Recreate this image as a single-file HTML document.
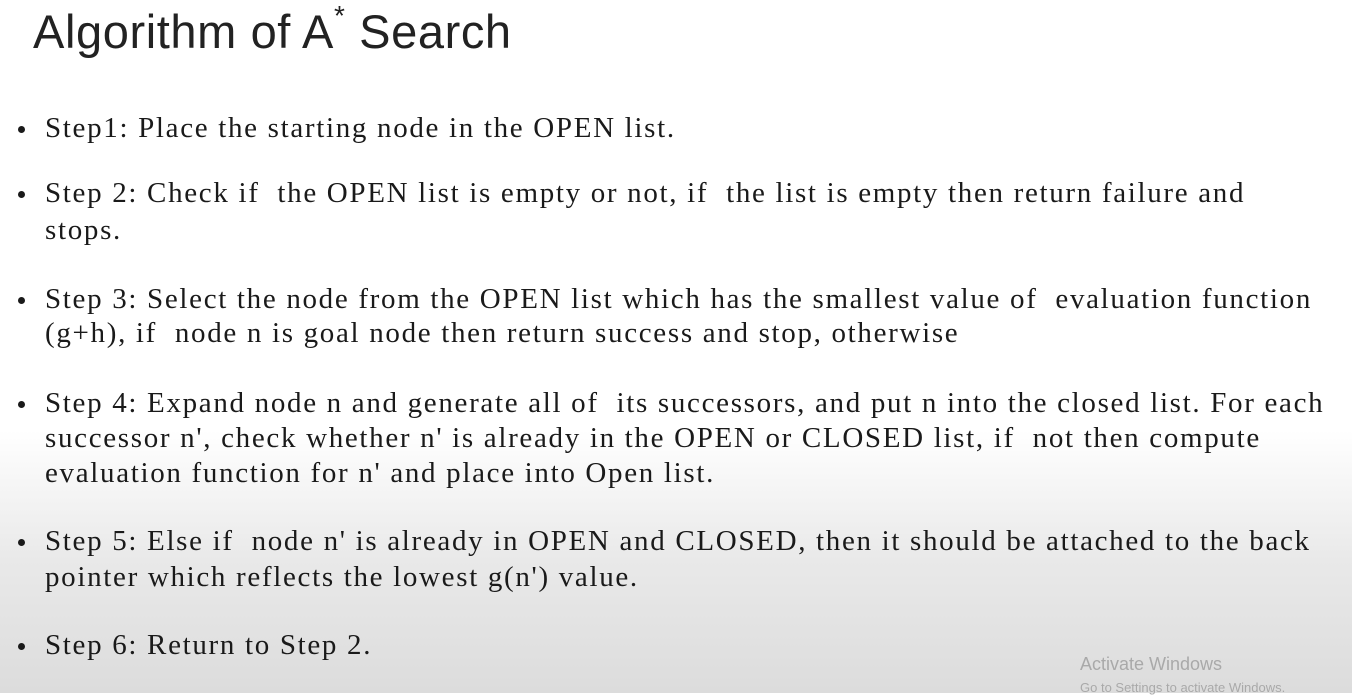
<!DOCTYPE html>
<html><head><meta charset="utf-8"><style>
html,body{margin:0;padding:0}
body{width:1352px;height:693px;position:relative;overflow:hidden;
background:linear-gradient(to bottom,#fff 0px,#fff 430px,#e9e9e9 560px,#dcdcdc 693px);}
.t{position:absolute;left:33px;top:2px;font-family:"Liberation Sans",sans-serif;font-size:47px;letter-spacing:0.6px;line-height:60px;color:#222;}
.t sup{font-size:28px;position:relative;top:-6px;vertical-align:top;line-height:40px}
.l{position:absolute;left:45px;height:36px;line-height:36px;font-family:"Liberation Serif",serif;font-size:29px;letter-spacing:1.68px;color:#1a1a1a;white-space:nowrap}
.b{position:absolute;left:18px;width:7px;height:7px;border-radius:50%;background:#1a1a1a}
.w{position:absolute;left:1080px;font-family:"Liberation Sans",sans-serif;color:#a9a9a9;white-space:nowrap}
</style></head><body>
<div class="t">Algorithm of A<sup>*</sup> Search</div>

<div class="b" style="top:126px"></div>
<div class="l" style="top:110px">Step1: Place the starting node in the OPEN list.</div>

<div class="b" style="top:191px"></div>
<div class="l" style="top:175px">Step 2: Check if&nbsp; the OPEN list is empty or not, if&nbsp; the list is empty then return failure and</div>
<div class="l" style="top:212px">stops.</div>

<div class="b" style="top:297px"></div>
<div class="l" style="top:281px">Step 3: Select the node from the OPEN list which has the smallest value of&nbsp; evaluation function</div>
<div class="l" style="top:315px">(g+h), if&nbsp; node n is goal node then return success and stop, otherwise</div>

<div class="b" style="top:401px"></div>
<div class="l" style="top:385px">Step 4: Expand node n and generate all of&nbsp; its successors, and put n into the closed list. For each</div>
<div class="l" style="top:420px">successor n', check whether n' is already in the OPEN or CLOSED list, if&nbsp; not then compute</div>
<div class="l" style="top:455px">evaluation function for n' and place into Open list.</div>

<div class="b" style="top:539px"></div>
<div class="l" style="top:523px">Step 5: Else if&nbsp; node n' is already in OPEN and CLOSED, then it should be attached to the back</div>
<div class="l" style="top:559px">pointer which reflects the lowest g(n') value.</div>

<div class="b" style="top:643px"></div>
<div class="l" style="top:627px">Step 6: Return to Step 2.</div>

<div class="w" style="top:654px;font-size:18px">Activate Windows</div>
<div class="w" style="top:680px;font-size:13px">Go to Settings to activate Windows.</div>
</body></html>
